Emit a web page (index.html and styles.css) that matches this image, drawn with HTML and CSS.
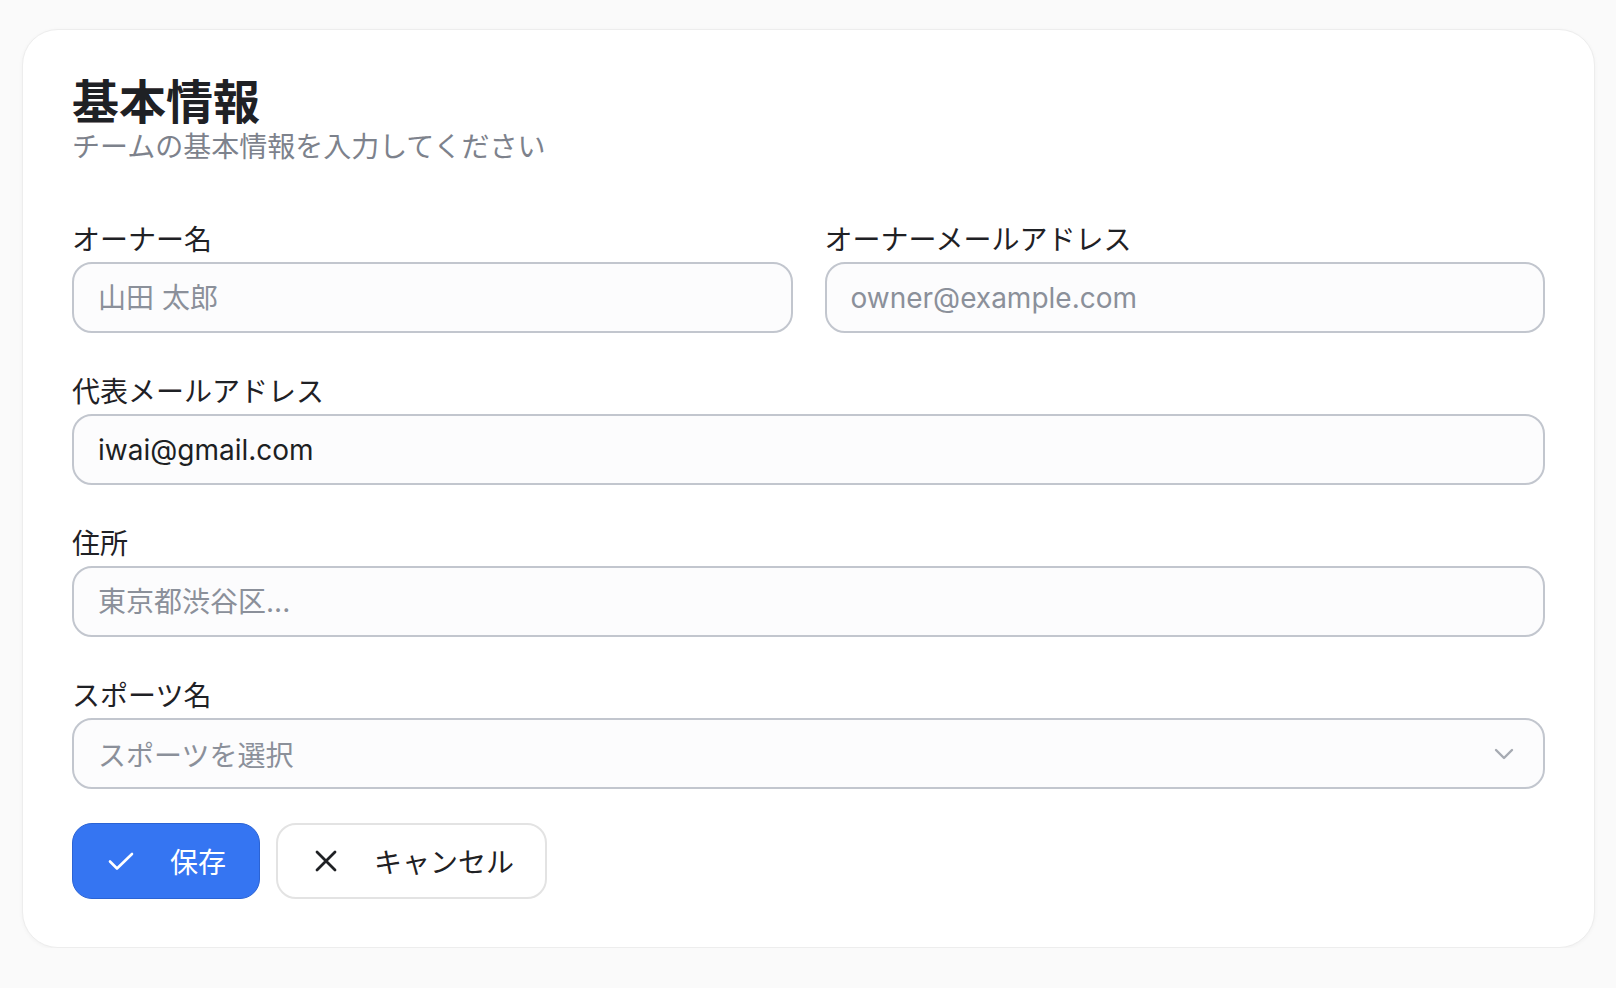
FILE: index.html
```html
<!DOCTYPE html>
<html lang="ja">
<head>
<meta charset="utf-8">
<title>基本情報</title>
<link rel="stylesheet" href="styles.css">
</head>
<body>
<main class="card">
  <header class="card-header">
    <h1 class="title">基本情報</h1>
    <p class="subtitle">チームの基本情報を入力してください</p>
  </header>
  <form class="form">
    <div class="row two">
      <div class="field">
        <label class="label">オーナー名</label>
        <input class="input" type="text" placeholder="山田 太郎">
      </div>
      <div class="field">
        <label class="label">オーナーメールアドレス</label>
        <input class="input" type="text" placeholder="owner@example.com">
      </div>
    </div>
    <div class="field">
      <label class="label">代表メールアドレス</label>
      <input class="input" type="text" value="iwai@gmail.com">
    </div>
    <div class="field">
      <label class="label">住所</label>
      <input class="input" type="text" placeholder="東京都渋谷区...">
    </div>
    <div class="field">
      <label class="label">スポーツ名</label>
      <div class="select">
        <span class="select-placeholder">スポーツを選択</span>
        <svg class="chevron" width="20" height="12" viewBox="0 0 20 12" fill="none"><path d="M2 2l8 8 8-8" stroke="#a6aab2" stroke-width="2.4" stroke-linecap="round" stroke-linejoin="round"/></svg>
      </div>
    </div>
  </form>
  <div class="actions">
    <button class="btn btn-primary" type="button">
      <svg class="btn-icon" width="32" height="32" viewBox="0 0 32 32" fill="none"><path d="M5 16.5l7 7L27 9" stroke="#ffffff" stroke-width="2.6" stroke-linecap="round" stroke-linejoin="round"/></svg>
      <span>保存</span>
    </button>
    <button class="btn btn-secondary" type="button">
      <svg class="btn-icon" width="32" height="32" viewBox="0 0 32 32" fill="none"><path d="M7 7l18 18M25 7L7 25" stroke="#1f2124" stroke-width="2.8" stroke-linecap="round"/></svg>
      <span>キャンセル</span>
    </button>
  </div>
</main>
</body>
</html>
```
FILE: styles.css
```css
* { box-sizing: border-box; }

html, body {
  margin: 0;
  background: #fafafa;
}

body {
  padding: 29px 21px 0 22px;
  font-family: Inter, "Noto Sans CJK JP", "Noto Sans", sans-serif;
  color: #1f2125;
}

.card {
  background: #ffffff;
  border: 1px solid #ededed;
  border-radius: 36px;
  box-shadow: 0 1px 4px rgba(0, 0, 0, 0.04);
  padding: 47px 49px 48px;
}

.card-header {
  margin-bottom: 53px;
}

.title {
  margin: 0;
  font-size: 47px;
  line-height: 50px;
  font-weight: 700;
  color: #1f2125;
}

.subtitle {
  margin: 0;
  font-size: 28px;
  line-height: 40px;
  color: #7d828c;
}

.form {
  display: flex;
  flex-direction: column;
  gap: 39px;
}

.row.two {
  display: grid;
  grid-template-columns: 1fr 1fr;
  gap: 32px;
}

.field {
  display: flex;
  flex-direction: column;
  gap: 2px;
}

.label {
  font-size: 28px;
  line-height: 40px;
  color: #1f2125;
}

.input,
.select {
  height: 71px;
  width: 100%;
  border: 2px solid #c2c6ce;
  border-radius: 20px;
  background: #fcfcfd;
  padding: 0 24px;
  font-family: Inter, "Noto Sans CJK JP", sans-serif;
  font-size: 28px;
  color: #1d1f23;
  outline: none;
}

.input::placeholder {
  color: #8b909a;
  opacity: 1;
}

.select {
  display: flex;
  align-items: center;
  justify-content: space-between;
  padding-right: 29px;
}

.select-placeholder {
  color: #8b909a;
}

.actions {
  display: flex;
  gap: 16px;
  margin-top: 34px;
}

.btn {
  height: 76px;
  display: flex;
  align-items: center;
  gap: 33px;
  padding: 0 33px 0 32px;
  border-radius: 20px;
  font-family: Inter, "Noto Sans CJK JP", sans-serif;
  font-size: 28px;
  cursor: pointer;
}

.btn-icon {
  flex: none;
}

.btn-primary {
  background: #3575f2;
  border: 1.5px solid #2b63d4;
  color: #ffffff;
}

.btn-secondary {
  background: #ffffff;
  border: 2px solid #e3e3e3;
  color: #1f2124;
  gap: 32px;
  padding-right: 31px;
}
```
